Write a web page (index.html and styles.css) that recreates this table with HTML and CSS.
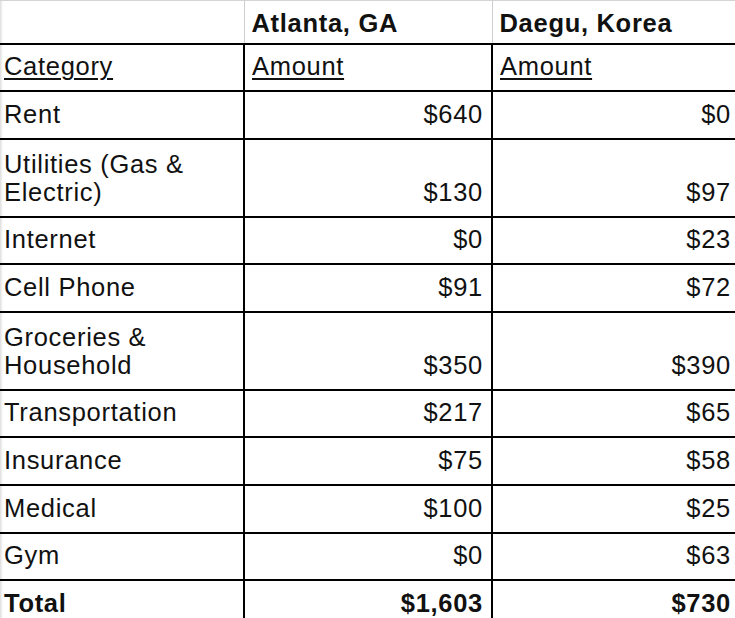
FILE: index.html
```html
<!DOCTYPE html>
<html lang="en">
<head>
<meta charset="utf-8">
<title>Monthly Costs</title>
<link rel="stylesheet" href="styles.css">
</head>
<body>
<div class="frame">
  <table class="sheet">
    <colgroup>
      <col class="c"><col class="c"><col class="c">
    </colgroup>
    <tr class="head">
      <td></td>
      <td class="city">Atlanta, GA</td>
      <td class="city">Daegu, Korea</td>
    </tr>
    <tr class="row">
      <td><span class="ul">Category</span></td>
      <td><span class="ul">Amount</span></td>
      <td><span class="ul">Amount</span></td>
    </tr>
    <tr class="row"><td>Rent</td><td class="num">$640</td><td class="num">$0</td></tr>
    <tr class="row tall"><td>Utilities (Gas &amp;<br>Electric)</td><td class="num">$130</td><td class="num">$97</td></tr>
    <tr class="row"><td>Internet</td><td class="num">$0</td><td class="num">$23</td></tr>
    <tr class="row"><td>Cell Phone</td><td class="num">$91</td><td class="num">$72</td></tr>
    <tr class="row tall"><td>Groceries &amp;<br>Household</td><td class="num">$350</td><td class="num">$390</td></tr>
    <tr class="row"><td>Transportation</td><td class="num">$217</td><td class="num">$65</td></tr>
    <tr class="row"><td>Insurance</td><td class="num">$75</td><td class="num">$58</td></tr>
    <tr class="row"><td>Medical</td><td class="num">$100</td><td class="num">$25</td></tr>
    <tr class="row"><td>Gym</td><td class="num">$0</td><td class="num">$63</td></tr>
    <tr class="row total"><td>Total</td><td class="num">$1,603</td><td class="num">$730</td></tr>
  </table>
</div>
</body>
</html>
```

FILE: styles.css
```css
html, body {
  margin: 0;
  padding: 0;
  background: #ffffff;
}

body {
  overflow: hidden;
  font-family: "Liberation Sans", Arial, Helvetica, sans-serif;
  color: #111111;
}

.frame {
  width: 735px;
  height: 618px;
  overflow: hidden;
  box-shadow: inset 3px 0 3px -2px rgba(0, 0, 0, 0.18);
}

.sheet {
  border-collapse: collapse;
  table-layout: fixed;
  width: 744px;
  margin-left: -5px;
  font-size: 25.5px;
  letter-spacing: 0.7px;
  line-height: 28px;
}

.sheet col.c {
  width: 248px;
}

.sheet td {
  padding: 0 8px 10px 7px;
  vertical-align: bottom;
  white-space: nowrap;
  border: 2px solid #000000;
}

.head {
  height: 43px;
}

.head td {
  padding-bottom: 6px;
  border-top: 1px solid #d4d4d4;
  border-left: 1px solid #cfcfcf;
  border-right: 1px solid #cfcfcf;
  font-weight: bold;
}

.row {
  height: 47.7px;
}

.row.tall {
  height: 77.7px;
}

.num {
  text-align: right;
}

.ul {
  text-decoration: underline;
  text-decoration-thickness: 2px;
  text-underline-offset: 3px;
}

.total td {
  font-weight: bold;
}
```
